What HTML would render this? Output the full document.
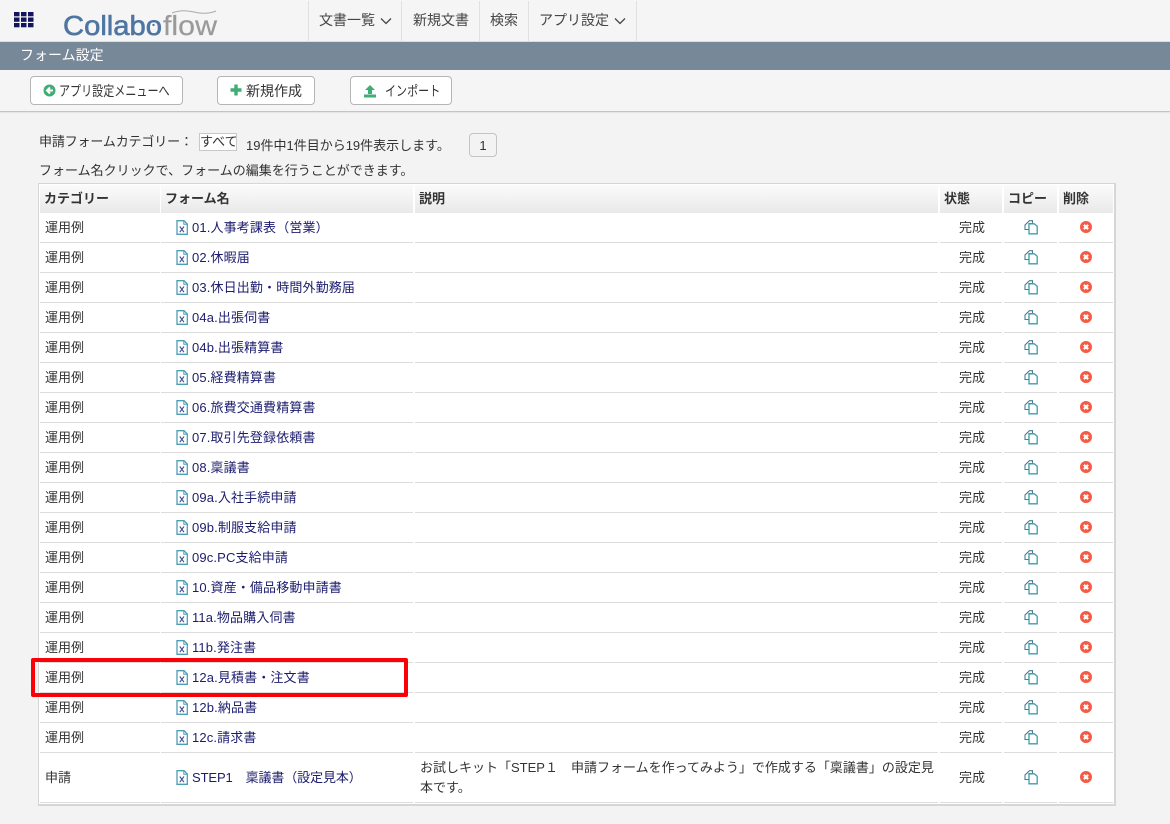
<!DOCTYPE html>
<html lang="ja">
<head>
<meta charset="utf-8">
<title>フォーム設定</title>
<style>
*{box-sizing:border-box}
html,body{margin:0;padding:0}
body{width:1170px;height:824px;overflow:hidden;background:#f3f3f3;position:relative;font-family:"Liberation Sans","Noto Sans CJK JP",sans-serif;font-size:13px;color:#333}
.abs{position:absolute;white-space:nowrap}
#nav{left:0;top:0;width:1170px;height:42px;background:#f5f5f5;border-bottom:1px solid #ddd}
.ni{position:absolute;top:1px;height:40px;line-height:39px;border-left:1px solid #e0e0e0;color:#444;font-size:14px;white-space:nowrap}
.ni span{position:absolute;top:0}
#bar{left:0;top:42px;width:1170px;height:28px;background:#778899;color:#fff;font-size:14px;line-height:26px;padding-left:20px}
#tool{left:0;top:70px;width:1170px;height:42px;background:#f5f5f5;border-bottom:1px solid #c4c4c4;box-shadow:0 1px 1px #e4e4e4}
.btn{position:absolute;top:76px;height:29px;background:#fff;border:1px solid #b5b5b5;border-radius:4px;line-height:28px;font-size:14px;color:#333;white-space:nowrap}
.btn svg{position:absolute;top:7px}
.btn span{position:absolute;top:0;transform-origin:left center}
#tbl{left:38px;top:183px;width:1078px;height:623px;background:#fff;border:1px solid #d6d6d6;border-right-width:2px;border-bottom-width:2px}
.h{position:absolute;top:1px;height:28px;background:linear-gradient(#fbfbfb,#e9e9e9);font-weight:bold;line-height:28px;font-size:13px;color:#333;padding-left:4px}
.r{position:absolute;left:1px;width:1073px;height:30px;line-height:29px}
.r i{position:absolute;bottom:0;height:1px;background:#dcdcdc}
.r .c{position:absolute;left:5px;top:0}
.r .n{position:absolute;left:152px;top:0;color:#1c1c6e;letter-spacing:.14px}
.r .s{position:absolute;left:919px;top:0}
.r svg{position:absolute}
.x{left:136px;top:7px}
.cp{left:984px;top:7px}
.dl{left:1040px;top:8px}
</style>
</head>
<body>
<svg width="0" height="0" style="position:absolute">
<defs>
<symbol id="xl" viewBox="0 0 12 15"><path d="M1 .7H8L11.3 4V14.3H1Z" fill="#fff" stroke="#4d9db5" stroke-width="1.3"/><path d="M7.800 .8V4.200H11.200" fill="none" stroke="#4d9db5"/><path d="M3.800 6.500 8 12.200M8 6.500 3.800 12.200" stroke="#3f4f8f" stroke-width="1.100"/></symbol>
<symbol id="cp" viewBox="0 0 14 15"><path d="M5.500 .7H8.500V3.500H5V9.500H1V5Z" fill="#fff" stroke="#4a7d8c" stroke-width="1.100"/><path d="M5 3.800H10.300L13.200 6.300V13.800H5Z" fill="#fff" stroke="#3e9db0" stroke-width="1.300"/></symbol>
<symbol id="dl" viewBox="0 0 12 12"><circle cx="6" cy="6" r="6" fill="#f65c45"/><path d="M3.900 3.900 8.100 8.100M8.100 3.900 3.900 8.100" stroke="#fff" stroke-width="2.200"/></symbol>
</defs>
</svg>

<div class="abs" id="nav"></div>
<svg class="abs" style="left:14px;top:12px" width="20" height="16" viewBox="0 0 20 16"><g fill="#14145e"><rect x="0" y="0" width="5.500" height="4.300"/><rect x="7" y="0" width="5.500" height="4.300"/><rect x="14" y="0" width="5.500" height="4.300"/><rect x="0" y="5.500" width="5.500" height="4.300"/><rect x="7" y="5.500" width="5.500" height="4.300"/><rect x="14" y="5.500" width="5.500" height="4.300"/><rect x="0" y="11" width="5.500" height="4.300"/><rect x="7" y="11" width="5.500" height="4.300"/><rect x="14" y="11" width="5.500" height="4.300"/></g></svg>
<svg class="abs" style="left:60px;top:8px" width="160" height="30" viewBox="0 0 160 30">
<text x="3" y="27" font-family="Liberation Sans" font-size="28" fill="#4f76a3" stroke="#4f76a3" stroke-width=".6" textLength="99" lengthAdjust="spacingAndGlyphs">Collabo</text>
<circle cx="93" cy="17" r="2.600" fill="#fff"/>
<circle cx="93.500" cy="17" r="1.200" fill="#4f76a3"/>
<text x="103" y="27" font-family="Liberation Sans" font-size="28" fill="#9a9a9a" stroke="#9a9a9a" stroke-width=".2" textLength="54" lengthAdjust="spacingAndGlyphs">flow</text>
<path d="M112 5Q122 1 134 4T156 3" fill="none" stroke="#aaa" stroke-width="1"/>
</svg>
<div class="ni" style="left:308px;width:94px"><span style="left:10px">文書一覧</span><svg style="position:absolute;left:71px;top:16px" width="12" height="8" viewBox="0 0 12 8"><path d="M1 1.500 6 6.500 11 1.500" fill="none" stroke="#444" stroke-width="1.300"/></svg></div>
<div class="ni" style="left:401px;width:78px"><span style="left:11px">新規文書</span></div>
<div class="ni" style="left:479px;width:49px"><span style="left:10px">検索</span></div>
<div class="ni" style="left:528px;width:109px;border-right:1px solid #e0e0e0"><span style="left:10px">アプリ設定</span><svg style="position:absolute;left:85px;top:16px" width="12" height="8" viewBox="0 0 12 8"><path d="M1 1.500 6 6.500 11 1.500" fill="none" stroke="#444" stroke-width="1.300"/></svg></div>

<div class="abs" id="bar">フォーム設定</div>
<div class="abs" id="tool"></div>

<div class="btn" style="left:30px;width:153px"><svg style="left:12px" width="13" height="13" viewBox="0 0 13 13"><circle cx="6.500" cy="6.500" r="6" fill="#3fae74"/><path d="M7 3.500 4 6.500 7 9.500M4.500 6.500H10" fill="none" stroke="#fff" stroke-width="2"/></svg><span style="left:28px;transform:scaleX(.79)">アプリ設定メニューへ</span></div>
<div class="btn" style="left:217px;width:98px"><svg style="left:12px" width="12" height="12" viewBox="0 0 12 12"><path d="M6 .5V11.500M.5 6H11.500" stroke="#3fae74" stroke-width="3.400"/></svg><span style="left:28px">新規作成</span></div>
<div class="btn" style="left:350px;width:102px"><svg style="left:12px" width="14" height="14" viewBox="0 0 14 14"><path d="M7 1 12 6H9V10H5V6H2Z" fill="#3fae74"/><rect x="1" y="10.500" width="12" height="3" fill="#3fae74"/></svg><span style="left:34px;transform:scaleX(.79)">インポート</span></div>

<div class="abs" style="left:39px;top:133px;line-height:18px;letter-spacing:-.15px">申請フォームカテゴリー：</div>
<div class="abs" style="left:199px;top:133px;width:38px;height:18px;background:#fff;border:1px solid #c8c8c8;line-height:15px;text-align:center;overflow:hidden">すべて</div>
<div class="abs" style="left:246px;top:137px;line-height:18px">19件中1件目から19件表示します。</div>
<div class="abs" style="left:469px;top:133px;width:28px;height:24px;background:#f3f3f3;border:1px solid #c4c4c4;border-radius:4px;text-align:center;line-height:23px">1</div>
<div class="abs" style="left:39px;top:162px;line-height:18px">フォーム名クリックで、フォームの編集を行うことができます。</div>

<div class="abs" id="tbl">
<div class="h" style="left:1px;width:120px">カテゴリー</div>
<div class="h" style="left:122px;width:252px">フォーム名</div>
<div class="h" style="left:376px;width:523px">説明</div>
<div class="h" style="left:901px;width:62px">状態</div>
<div class="h" style="left:965px;width:53px;padding-left:4px">コピー</div>
<div class="h" style="left:1020px;width:54px">削除</div>

<div class="r" style="top:29px"><i style="left:0;width:120px"></i><i style="left:121px;width:252px"></i><i style="left:375px;width:523px"></i><i style="left:900px;width:62px"></i><i style="left:964px;width:53px"></i><i style="left:1019px;width:54px"></i><span class="c">運用例</span><svg class="x" width="12" height="15"><use href="#xl"/></svg><span class="n">01.人事考課表（営業）</span><span class="s">完成</span><svg class="cp" width="14" height="15"><use href="#cp"/></svg><svg class="dl" width="12" height="12"><use href="#dl"/></svg></div>
<div class="r" style="top:59px"><i style="left:0;width:120px"></i><i style="left:121px;width:252px"></i><i style="left:375px;width:523px"></i><i style="left:900px;width:62px"></i><i style="left:964px;width:53px"></i><i style="left:1019px;width:54px"></i><span class="c">運用例</span><svg class="x" width="12" height="15"><use href="#xl"/></svg><span class="n">02.休暇届</span><span class="s">完成</span><svg class="cp" width="14" height="15"><use href="#cp"/></svg><svg class="dl" width="12" height="12"><use href="#dl"/></svg></div>
<div class="r" style="top:89px"><i style="left:0;width:120px"></i><i style="left:121px;width:252px"></i><i style="left:375px;width:523px"></i><i style="left:900px;width:62px"></i><i style="left:964px;width:53px"></i><i style="left:1019px;width:54px"></i><span class="c">運用例</span><svg class="x" width="12" height="15"><use href="#xl"/></svg><span class="n">03.休日出勤・時間外勤務届</span><span class="s">完成</span><svg class="cp" width="14" height="15"><use href="#cp"/></svg><svg class="dl" width="12" height="12"><use href="#dl"/></svg></div>
<div class="r" style="top:119px"><i style="left:0;width:120px"></i><i style="left:121px;width:252px"></i><i style="left:375px;width:523px"></i><i style="left:900px;width:62px"></i><i style="left:964px;width:53px"></i><i style="left:1019px;width:54px"></i><span class="c">運用例</span><svg class="x" width="12" height="15"><use href="#xl"/></svg><span class="n">04a.出張伺書</span><span class="s">完成</span><svg class="cp" width="14" height="15"><use href="#cp"/></svg><svg class="dl" width="12" height="12"><use href="#dl"/></svg></div>
<div class="r" style="top:149px"><i style="left:0;width:120px"></i><i style="left:121px;width:252px"></i><i style="left:375px;width:523px"></i><i style="left:900px;width:62px"></i><i style="left:964px;width:53px"></i><i style="left:1019px;width:54px"></i><span class="c">運用例</span><svg class="x" width="12" height="15"><use href="#xl"/></svg><span class="n">04b.出張精算書</span><span class="s">完成</span><svg class="cp" width="14" height="15"><use href="#cp"/></svg><svg class="dl" width="12" height="12"><use href="#dl"/></svg></div>
<div class="r" style="top:179px"><i style="left:0;width:120px"></i><i style="left:121px;width:252px"></i><i style="left:375px;width:523px"></i><i style="left:900px;width:62px"></i><i style="left:964px;width:53px"></i><i style="left:1019px;width:54px"></i><span class="c">運用例</span><svg class="x" width="12" height="15"><use href="#xl"/></svg><span class="n">05.経費精算書</span><span class="s">完成</span><svg class="cp" width="14" height="15"><use href="#cp"/></svg><svg class="dl" width="12" height="12"><use href="#dl"/></svg></div>
<div class="r" style="top:209px"><i style="left:0;width:120px"></i><i style="left:121px;width:252px"></i><i style="left:375px;width:523px"></i><i style="left:900px;width:62px"></i><i style="left:964px;width:53px"></i><i style="left:1019px;width:54px"></i><span class="c">運用例</span><svg class="x" width="12" height="15"><use href="#xl"/></svg><span class="n">06.旅費交通費精算書</span><span class="s">完成</span><svg class="cp" width="14" height="15"><use href="#cp"/></svg><svg class="dl" width="12" height="12"><use href="#dl"/></svg></div>
<div class="r" style="top:239px"><i style="left:0;width:120px"></i><i style="left:121px;width:252px"></i><i style="left:375px;width:523px"></i><i style="left:900px;width:62px"></i><i style="left:964px;width:53px"></i><i style="left:1019px;width:54px"></i><span class="c">運用例</span><svg class="x" width="12" height="15"><use href="#xl"/></svg><span class="n">07.取引先登録依頼書</span><span class="s">完成</span><svg class="cp" width="14" height="15"><use href="#cp"/></svg><svg class="dl" width="12" height="12"><use href="#dl"/></svg></div>
<div class="r" style="top:269px"><i style="left:0;width:120px"></i><i style="left:121px;width:252px"></i><i style="left:375px;width:523px"></i><i style="left:900px;width:62px"></i><i style="left:964px;width:53px"></i><i style="left:1019px;width:54px"></i><span class="c">運用例</span><svg class="x" width="12" height="15"><use href="#xl"/></svg><span class="n">08.稟議書</span><span class="s">完成</span><svg class="cp" width="14" height="15"><use href="#cp"/></svg><svg class="dl" width="12" height="12"><use href="#dl"/></svg></div>
<div class="r" style="top:299px"><i style="left:0;width:120px"></i><i style="left:121px;width:252px"></i><i style="left:375px;width:523px"></i><i style="left:900px;width:62px"></i><i style="left:964px;width:53px"></i><i style="left:1019px;width:54px"></i><span class="c">運用例</span><svg class="x" width="12" height="15"><use href="#xl"/></svg><span class="n">09a.入社手続申請</span><span class="s">完成</span><svg class="cp" width="14" height="15"><use href="#cp"/></svg><svg class="dl" width="12" height="12"><use href="#dl"/></svg></div>
<div class="r" style="top:329px"><i style="left:0;width:120px"></i><i style="left:121px;width:252px"></i><i style="left:375px;width:523px"></i><i style="left:900px;width:62px"></i><i style="left:964px;width:53px"></i><i style="left:1019px;width:54px"></i><span class="c">運用例</span><svg class="x" width="12" height="15"><use href="#xl"/></svg><span class="n">09b.制服支給申請</span><span class="s">完成</span><svg class="cp" width="14" height="15"><use href="#cp"/></svg><svg class="dl" width="12" height="12"><use href="#dl"/></svg></div>
<div class="r" style="top:359px"><i style="left:0;width:120px"></i><i style="left:121px;width:252px"></i><i style="left:375px;width:523px"></i><i style="left:900px;width:62px"></i><i style="left:964px;width:53px"></i><i style="left:1019px;width:54px"></i><span class="c">運用例</span><svg class="x" width="12" height="15"><use href="#xl"/></svg><span class="n">09c.PC支給申請</span><span class="s">完成</span><svg class="cp" width="14" height="15"><use href="#cp"/></svg><svg class="dl" width="12" height="12"><use href="#dl"/></svg></div>
<div class="r" style="top:389px"><i style="left:0;width:120px"></i><i style="left:121px;width:252px"></i><i style="left:375px;width:523px"></i><i style="left:900px;width:62px"></i><i style="left:964px;width:53px"></i><i style="left:1019px;width:54px"></i><span class="c">運用例</span><svg class="x" width="12" height="15"><use href="#xl"/></svg><span class="n">10.資産・備品移動申請書</span><span class="s">完成</span><svg class="cp" width="14" height="15"><use href="#cp"/></svg><svg class="dl" width="12" height="12"><use href="#dl"/></svg></div>
<div class="r" style="top:419px"><i style="left:0;width:120px"></i><i style="left:121px;width:252px"></i><i style="left:375px;width:523px"></i><i style="left:900px;width:62px"></i><i style="left:964px;width:53px"></i><i style="left:1019px;width:54px"></i><span class="c">運用例</span><svg class="x" width="12" height="15"><use href="#xl"/></svg><span class="n">11a.物品購入伺書</span><span class="s">完成</span><svg class="cp" width="14" height="15"><use href="#cp"/></svg><svg class="dl" width="12" height="12"><use href="#dl"/></svg></div>
<div class="r" style="top:449px"><i style="left:0;width:120px"></i><i style="left:121px;width:252px"></i><i style="left:375px;width:523px"></i><i style="left:900px;width:62px"></i><i style="left:964px;width:53px"></i><i style="left:1019px;width:54px"></i><span class="c">運用例</span><svg class="x" width="12" height="15"><use href="#xl"/></svg><span class="n">11b.発注書</span><span class="s">完成</span><svg class="cp" width="14" height="15"><use href="#cp"/></svg><svg class="dl" width="12" height="12"><use href="#dl"/></svg></div>
<div class="r" style="top:479px"><i style="left:0;width:120px"></i><i style="left:121px;width:252px"></i><i style="left:375px;width:523px"></i><i style="left:900px;width:62px"></i><i style="left:964px;width:53px"></i><i style="left:1019px;width:54px"></i><span class="c">運用例</span><svg class="x" width="12" height="15"><use href="#xl"/></svg><span class="n">12a.見積書・注文書</span><span class="s">完成</span><svg class="cp" width="14" height="15"><use href="#cp"/></svg><svg class="dl" width="12" height="12"><use href="#dl"/></svg></div>
<div class="r" style="top:509px"><i style="left:0;width:120px"></i><i style="left:121px;width:252px"></i><i style="left:375px;width:523px"></i><i style="left:900px;width:62px"></i><i style="left:964px;width:53px"></i><i style="left:1019px;width:54px"></i><span class="c">運用例</span><svg class="x" width="12" height="15"><use href="#xl"/></svg><span class="n">12b.納品書</span><span class="s">完成</span><svg class="cp" width="14" height="15"><use href="#cp"/></svg><svg class="dl" width="12" height="12"><use href="#dl"/></svg></div>
<div class="r" style="top:539px"><i style="left:0;width:120px"></i><i style="left:121px;width:252px"></i><i style="left:375px;width:523px"></i><i style="left:900px;width:62px"></i><i style="left:964px;width:53px"></i><i style="left:1019px;width:54px"></i><span class="c">運用例</span><svg class="x" width="12" height="15"><use href="#xl"/></svg><span class="n">12c.請求書</span><span class="s">完成</span><svg class="cp" width="14" height="15"><use href="#cp"/></svg><svg class="dl" width="12" height="12"><use href="#dl"/></svg></div>
<div class="r" style="top:569px;height:50px;line-height:49px"><i style="left:0;width:120px"></i><i style="left:121px;width:252px"></i><i style="left:375px;width:523px"></i><i style="left:900px;width:62px"></i><i style="left:964px;width:53px"></i><i style="left:1019px;width:54px"></i><span class="c">申請</span><svg class="x" style="top:17px" width="12" height="15"><use href="#xl"/></svg><span class="n" style="letter-spacing:-.1px">STEP1　稟議書（設定見本）</span><span style="position:absolute;left:380px;top:5px;width:519px;line-height:20px;white-space:normal;color:#333">お試しキット「STEP１　申請フォームを作ってみよう」で作成する「稟議書」の設定見本です。</span><span class="s">完成</span><svg class="cp" style="top:17px" width="14" height="15"><use href="#cp"/></svg><svg class="dl" style="top:18px" width="12" height="12"><use href="#dl"/></svg></div>
</div>

<div class="abs" style="left:31px;top:658px;width:377px;height:39px;border:4px solid #fb0007;border-radius:2px"></div>
</body>
</html>
